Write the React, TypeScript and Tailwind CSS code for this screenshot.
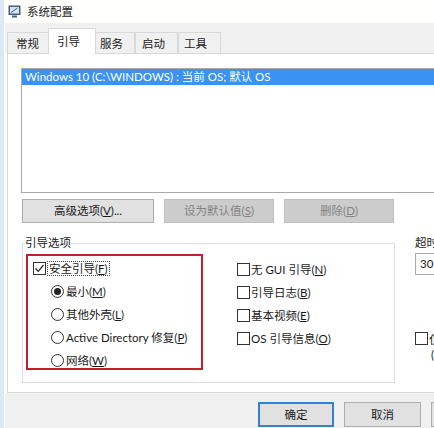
import React from "react";

const font = "font-['Lato','Noto_Sans_CJK_SC',sans-serif]";

const Key = ({ k }: { k: string }) => (
  <>
    (<span className="underline">{k}</span>)
  </>
);

const CheckBox = ({ checked = false }: { checked?: boolean }) => (
  <span className="flex h-[13px] w-[13px] shrink-0 items-center justify-center border border-[#333] bg-white">
    {checked && (
      <svg width="11" height="11" viewBox="0 0 11 11">
        <path d="M1.5 5.5 L4.2 8.3 L9.5 2" fill="none" stroke="#222" strokeWidth="1.2" />
      </svg>
    )}
  </span>
);

const Radio = ({ checked = false }: { checked?: boolean }) => (
  <span className="flex h-[13px] w-[13px] shrink-0 items-center justify-center rounded-full border border-[#333] bg-white">
    {checked && <span className="h-[7px] w-[7px] rounded-full bg-[#222]" />}
  </span>
);

const tabs = [
  { label: "常规", w: "w-[42px] pl-[8px]" },
  { label: "引导", w: "w-[48px] pl-[8px]", active: true },
  { label: "服务", w: "w-[40px] pl-[4px]" },
  { label: "启动", w: "w-[43px] pl-[6px]" },
  { label: "工具", w: "w-[43px] pl-[5px]" },
];

const AppIcon = () => (
  <svg width="13" height="13" viewBox="0 0 13 13">
    <rect x="0.5" y="0.5" width="12" height="9.5" fill="#45607f" />
    <rect x="2" y="2" width="9" height="6.5" fill="#d3e3f4" />
    <path d="M3 7.5 L9.5 3" stroke="#45607f" strokeWidth="1" />
    <rect x="4" y="10.5" width="5" height="2" fill="#45607f" />
  </svg>
);

export default function App() {
  return (
    <div className={`flex h-[428px] w-[434px] overflow-hidden bg-white text-[11.5px] leading-[14px] text-[#1a1a1a] ${font}`}>
      {/* window edge */}
      <div className="w-[4px] shrink-0 bg-[#dde8f6]" />
      <div className="w-[1px] shrink-0 bg-white" />

      <div className="flex min-w-0 flex-1 flex-col">
        {/* Title bar */}
        <div className="flex h-[23px] shrink-0 items-center gap-[6px] bg-[#fffffc] pl-[3px]">
          <AppIcon />
          <span className="text-[#222]">系统配置</span>
        </div>

        {/* Tab strip */}
        <div className="flex h-[30px] shrink-0 items-end bg-[#f0f0f0] pl-[2px]">
          {tabs.map((t) =>
            t.active ? (
              <div
                key={t.label}
                className={`relative -mb-[1px] -mx-[1px] flex h-[26px] items-center border border-b-0 border-[#d9d9d9] bg-white ${t.w}`}
              >
                {t.label}
              </div>
            ) : (
              <div
                key={t.label}
                className={`flex h-[21px] items-center border border-b-0 border-[#d9d9d9] bg-[#f0f0f0] pt-[1px] ${t.w}`}
              >
                {t.label}
              </div>
            )
          )}
        </div>

        {/* Tab page */}
        <div className="ml-[2px] h-[340px] w-[440px] shrink-0 border-b border-l border-t border-[#d9d9d9] bg-white">
          {/* OS list */}
          <div className="ml-[13px] mt-[14px] h-[125px] w-[440px] border border-[#a9a9a9] bg-white">
            <div className="flex h-[16px] items-center bg-[#3a93f2] pl-[3px] text-white">
              Windows 10 (C:\WINDOWS) : 当前 OS; 默认 OS
            </div>
          </div>

          {/* Buttons */}
          <div className="ml-[14px] mt-[6px] flex gap-[10px]">
            <button className="h-[24px] w-[132px] border border-[#adadad] bg-[#e1e1e1]">
              高级选项<Key k="V" />...
            </button>
            <button className="h-[24px] w-[110px] border border-[#bfbfbf] bg-[#cccccc] text-[#838383]">
              设为默认值<Key k="S" />
            </button>
            <button className="h-[24px] w-[110px] border border-[#bfbfbf] bg-[#cccccc] text-[#838383]">
              删除<Key k="D" />
            </button>
          </div>

          {/* Options row */}
          <div className="mt-[13px] flex">
            <fieldset className="ml-[14px] h-[147px] w-[373px] shrink-0 border border-[#dcdcdc]">
              <legend className="ml-[2px] leading-[14px]">引导选项</legend>
              <div className="flex">
                {/* highlighted area */}
                <div className="ml-[3px] mt-[4px] h-[116px] w-[177px] shrink-0 border-2 border-[#c41e2e]">
                  <div className="flex h-[22px] items-center gap-[1px] pl-[5px] pt-[2px]">
                    <CheckBox checked />
                    <span className="border border-dotted border-[#444] px-[1px] leading-[13px]">
                      安全引导<Key k="F" />
                    </span>
                  </div>
                  <div className="mt-[2px] flex flex-col pl-[23px]">
                    {[
                      { label: "最小", k: "M", checked: true },
                      { label: "其他外壳", k: "L" },
                      { label: "Active Directory 修复", k: "P" },
                      { label: "网络", k: "W" },
                    ].map((r) => (
                      <div key={r.k} className="flex h-[23px] items-center gap-[2px]">
                        <Radio checked={r.checked} />
                        <span>
                          {r.label}
                          <Key k={r.k} />
                        </span>
                      </div>
                    ))}
                  </div>
                </div>

                <div className="ml-[34px] flex flex-col pt-[8px]">
                  {[
                    { label: "无 GUI 引导", k: "N" },
                    { label: "引导日志", k: "B" },
                    { label: "基本视频", k: "E" },
                    { label: "OS 引导信息", k: "O" },
                  ].map((c) => (
                    <div key={c.k} className="flex h-[23px] items-center gap-[1px]">
                      <CheckBox />
                      <span>
                        {c.label}
                        <Key k={c.k} />
                      </span>
                    </div>
                  ))}
                </div>
              </div>
            </fieldset>

            {/* Timeout column */}
            <div className="ml-[20px] flex shrink-0 flex-col">
              <span className="leading-[14px]">超时(T):</span>
              <div className="mt-[3px] flex h-[22px] w-[70px] items-center border border-[#a9a9a9] pl-[4px]">
                30
              </div>
              <div className="mt-[57px] flex items-start gap-[1px]">
                <CheckBox />
                <div className="flex flex-col leading-[15px]">
                  <span>仅使引导设置</span>
                  <span className="pl-[2px]">(永久)</span>
                </div>
              </div>
            </div>
          </div>
        </div>

        {/* Dialog buttons */}
        <div className="flex flex-1 gap-[10px] bg-[#f0f0f0] pl-[253px] pt-[9px]">
          <button className="h-[25px] w-[76px] shrink-0 border-2 border-[#2f82d4] bg-[#e1e1e1]">确定</button>
          <button className="h-[25px] w-[77px] shrink-0 border border-[#adadad] bg-[#e1e1e1]">取消</button>
          <button className="h-[25px] w-[77px] shrink-0 border border-[#adadad] bg-[#e1e1e1]">应用(A)</button>
        </div>
      </div>
    </div>
  );
}
